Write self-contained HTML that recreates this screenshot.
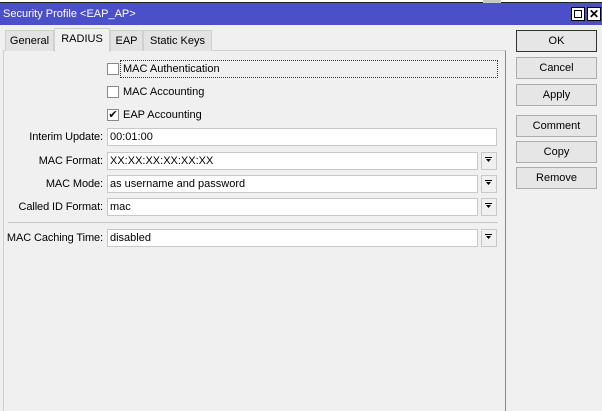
<!DOCTYPE html>
<html><head><style>
body{margin:0;width:602px;height:411px;background:#f0f0f0;font-family:"Liberation Sans",sans-serif;font-size:11px;color:#000;position:relative;overflow:hidden}
div{position:absolute;box-sizing:border-box}
.lbl{right:499px;text-align:right;white-space:nowrap;height:18px;line-height:19px;letter-spacing:-0.1px}
.in{left:107px;height:18px;background:#fff;border:1px solid #c8c8c8;padding-left:2px;line-height:17px}
.dd{left:481px;width:16px;height:18px;border:1px solid #c8c8c8;background:#f0f0f0}
.btn{left:516px;width:81px;height:22px;border:1px solid #adadad;background:#e6e6e6;text-align:center;line-height:21px}
.cb{left:107px;width:12px;height:12px;border:1px solid #8a8a8a;background:#fff}
.ct{left:123px;line-height:17px}
.tab{top:30px;height:21px;line-height:21px;border:1px solid #d0d0d0;border-bottom:none;background:#e3e3e3;text-align:center}
</style></head><body>
<div style="left:0;top:0;width:602px;height:3px;background:#fff;border-bottom:1px solid #222"></div>
<div style="left:483px;top:0;width:18px;height:3px;background:#c8c8c8"></div>
<div style="left:0;top:3px;width:602px;height:22px;background:#4b50c8;color:#fff;padding-left:3px;line-height:22px">Security Profile &lt;EAP_AP&gt;</div>
<div style="left:571px;top:7px;width:14px;height:14px;border:1px solid #000;background:#fff"><div style="left:2px;top:2px;width:8px;height:8px;border:1px solid #000"></div></div>
<div style="left:587px;top:7px;width:14px;height:14px;border:1px solid #000;background:#fff;font-size:12px;font-weight:bold;line-height:12px;text-align:center">✕</div>
<div style="left:3px;top:50px;width:503px;height:361px;border-left:1px solid #d0d0d0;border-top:1px solid #d0d0d0;border-right:1px solid #888"></div>
<div class="tab" style="left:5px;width:49px">General</div>
<div class="tab" style="left:54px;top:28px;width:56px;height:24px;background:#f0f0f0;border-color:#d0d0d0">RADIUS</div>
<div class="tab" style="left:110px;width:33px">EAP</div>
<div class="tab" style="left:143px;width:69px">Static Keys</div>
<div class="cb" style="top:63px"></div><div class="ct" style="top:61px">MAC Authentication</div>
<div style="left:120px;top:60px;width:378px;height:18px;border:1px dotted #333"></div>
<div class="cb" style="top:86px"></div><div class="ct" style="top:84px">MAC Accounting</div>
<div class="cb" style="top:109px;font-size:11px;line-height:10px;text-align:center">✔</div><div class="ct" style="top:107px">EAP Accounting</div>
<div class="lbl" style="top:128px">Interim Update:</div><div class="in" style="top:128px;width:390px">00:01:00</div>
<div class="lbl" style="top:152px">MAC Format:</div><div class="in" style="top:152px;width:371px">XX:XX:XX:XX:XX:XX</div><div class="dd" style="top:152px"></div>
<div class="lbl" style="top:175px">MAC Mode:</div><div class="in" style="top:175px;width:371px">as username and password</div><div class="dd" style="top:175px"></div>
<div class="lbl" style="top:198px">Called ID Format:</div><div class="in" style="top:198px;width:371px">mac</div><div class="dd" style="top:198px"></div>
<div style="left:8px;top:222px;width:490px;height:1px;background:#c8c8c8"></div>
<div class="lbl" style="top:229px">MAC Caching Time:</div><div class="in" style="top:229px;width:371px">disabled</div><div class="dd" style="top:229px"></div>
<div class="btn" style="top:30px;border-color:#333">OK</div>
<div class="btn" style="top:57px">Cancel</div>
<div class="btn" style="top:84px">Apply</div>
<div class="btn" style="top:115px">Comment</div>
<div class="btn" style="top:141px">Copy</div>
<div class="btn" style="top:167px">Remove</div>
<svg style="position:absolute;left:0;top:0" width="602" height="411">
<g fill="#000"><path d="M485 157h7v1h-7zM486 159h5l-2.5 3z" /><path d="M485 180h7v1h-7zM486 182h5l-2.5 3z"/><path d="M485 203h7v1h-7zM486 205h5l-2.5 3z"/><path d="M485 234h7v1h-7zM486 236h5l-2.5 3z"/></g>
</svg>
</body></html>
